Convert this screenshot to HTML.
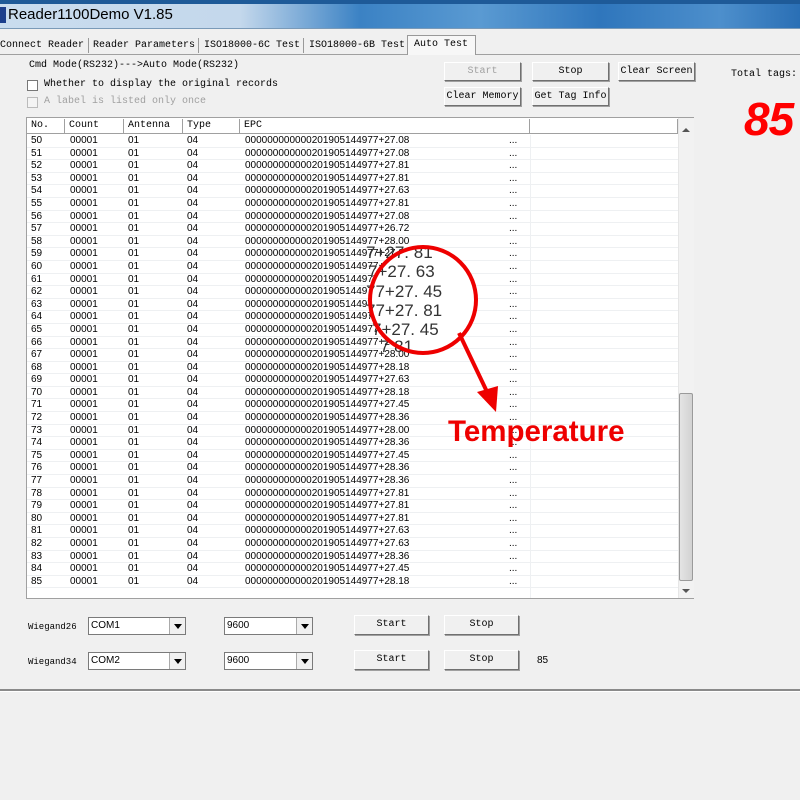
<!DOCTYPE html>
<html><head><meta charset="utf-8"><style>
*{margin:0;padding:0;box-sizing:border-box}
body{width:800px;height:800px;background:#f0f0f0;position:relative;overflow:hidden;font-family:"Liberation Mono","Noto Sans CJK SC",monospace;font-size:10px;color:#000}
.a{position:absolute;white-space:nowrap}
.title{left:0;top:0;width:800px;height:29px;background:linear-gradient(90deg,#c9dcee 0,#c4d8ec 30%,#3b82c4 45%,#5a9ad2 60%,#2f76bc 75%,#4d8fcc 90%,#2a6fb5 100%);border-bottom:1px solid #7a9ab8}
.title:before{content:"";position:absolute;left:0;top:0;right:0;height:4px;background:#1e5a98}
.btn{position:absolute;background:#f0f0f0;border:1px solid;border-color:#fff #707070 #707070 #fff;box-shadow:1px 1px 0 #a0a0a0;text-align:center;font-size:10px;line-height:17px}
.cb{position:absolute;width:11px;height:11px;border:1px solid #777;background:#fff}
.list{left:26px;top:117px;width:668px;height:482px;background:#fff;border:1px solid #a0a0a0}
.hd{position:absolute;top:1px;height:15px;border-right:1px solid #a0a0a0;border-bottom:1px solid #a0a0a0;background:#fff;padding-left:4px;line-height:14px;font-size:10px}
.rows{position:absolute;left:0;top:17px;width:651px;font-family:"Liberation Sans",sans-serif;font-size:10px}
.r{height:12.6px;line-height:12.5px;border-bottom:1px solid #eef0f2;position:relative}
.r span{position:absolute}
.c1{left:4px}.c2{left:43px}.c3{left:101px}.c4{left:160px}.c5{left:218px}.c6{left:482px}
.combo{position:absolute;height:18px;background:#fff;border:1px solid #7a7a7a;font-family:"Liberation Sans",sans-serif;font-size:10px;line-height:16px;padding-left:2px}
.combo i{position:absolute;right:0;top:0;width:16px;height:16px;background:#f0f0f0;border-left:1px solid #aaa}
.combo i:after{content:"";position:absolute;left:4px;top:6px;border:4px solid transparent;border-top:5px solid #000}
</style></head><body>
<div class="a title"></div>
<div class="a" style="left:0;top:7px;width:6px;height:16px;background:#1c3f8c"></div>
<div class="a" style="left:8px;top:6px;font-family:'Liberation Sans',sans-serif;font-size:15px">Reader1100Demo V1.85</div>

<div class="a" style="left:0;top:54px;width:800px;height:1px;background:#a0a0a0"></div>
<div class="a" style="left:0;top:37px;height:17px;line-height:17px;font-size:10px">Connect Reader</div>
<div class="a" style="left:88px;top:38px;width:1px;height:15px;background:#999"></div>
<div class="a" style="left:93px;top:37px;line-height:17px">Reader Parameters</div>
<div class="a" style="left:198px;top:38px;width:1px;height:15px;background:#999"></div>
<div class="a" style="left:204px;top:37px;line-height:17px">ISO18000-6C Test</div>
<div class="a" style="left:303px;top:38px;width:1px;height:15px;background:#999"></div>
<div class="a" style="left:309px;top:37px;line-height:17px">ISO18000-6B Test</div>
<div class="a" style="left:407px;top:35px;width:69px;height:20px;background:#f7f7f7;border:1px solid #999;border-bottom:none;padding-left:6px;line-height:18px">Auto Test</div>

<div class="a" style="left:29px;top:60px">Cmd Mode(RS232)--->Auto Mode(RS232)</div>
<div class="cb" style="left:27px;top:80px"></div>
<div class="a" style="left:44px;top:79px">Whether to display the original records</div>
<div class="cb" style="left:27px;top:97px;border-color:#bbb;background:#f4f4f4"></div>
<div class="a" style="left:44px;top:96px;color:#a0a0a0">A label is listed only once</div>

<div class="btn" style="left:444px;top:62px;width:77px;height:19px;color:#a0a0a0">Start</div>
<div class="btn" style="left:532px;top:62px;width:77px;height:19px">Stop</div>
<div class="btn" style="left:618px;top:62px;width:77px;height:19px">Clear Screen</div>
<div class="btn" style="left:444px;top:87px;width:77px;height:19px">Clear Memory</div>
<div class="btn" style="left:532px;top:87px;width:77px;height:19px">Get Tag Info</div>
<div class="a" style="left:731px;top:69px">Total tags:</div>
<div class="a" style="left:744px;top:94px;color:#f00;font-family:'Liberation Sans',sans-serif;font-style:italic;font-weight:bold;font-size:46px;line-height:50px;letter-spacing:-1px">85</div>

<div class="a list">
<div class="hd" style="left:0;width:38px">No.</div>
<div class="hd" style="left:38px;width:59px">Count</div>
<div class="hd" style="left:97px;width:59px">Antenna</div>
<div class="hd" style="left:156px;width:57px">Type</div>
<div class="hd" style="left:213px;width:290px">EPC</div>
<div class="hd" style="left:503px;width:148px"></div>
<div class="a" style="left:503px;top:17px;width:1px;height:463px;background:#eef0f2"></div>
<div class="rows">
<div class="r"><span class="c1">50</span><span class="c2">00001</span><span class="c3">01</span><span class="c4">04</span><span class="c5">000000000000201905144977+27.08</span><span class="c6">...</span></div>
<div class="r"><span class="c1">51</span><span class="c2">00001</span><span class="c3">01</span><span class="c4">04</span><span class="c5">000000000000201905144977+27.08</span><span class="c6">...</span></div>
<div class="r"><span class="c1">52</span><span class="c2">00001</span><span class="c3">01</span><span class="c4">04</span><span class="c5">000000000000201905144977+27.81</span><span class="c6">...</span></div>
<div class="r"><span class="c1">53</span><span class="c2">00001</span><span class="c3">01</span><span class="c4">04</span><span class="c5">000000000000201905144977+27.81</span><span class="c6">...</span></div>
<div class="r"><span class="c1">54</span><span class="c2">00001</span><span class="c3">01</span><span class="c4">04</span><span class="c5">000000000000201905144977+27.63</span><span class="c6">...</span></div>
<div class="r"><span class="c1">55</span><span class="c2">00001</span><span class="c3">01</span><span class="c4">04</span><span class="c5">000000000000201905144977+27.81</span><span class="c6">...</span></div>
<div class="r"><span class="c1">56</span><span class="c2">00001</span><span class="c3">01</span><span class="c4">04</span><span class="c5">000000000000201905144977+27.08</span><span class="c6">...</span></div>
<div class="r"><span class="c1">57</span><span class="c2">00001</span><span class="c3">01</span><span class="c4">04</span><span class="c5">000000000000201905144977+26.72</span><span class="c6">...</span></div>
<div class="r"><span class="c1">58</span><span class="c2">00001</span><span class="c3">01</span><span class="c4">04</span><span class="c5">000000000000201905144977+28.00</span><span class="c6">...</span></div>
<div class="r"><span class="c1">59</span><span class="c2">00001</span><span class="c3">01</span><span class="c4">04</span><span class="c5">000000000000201905144977+27.81</span><span class="c6">...</span></div>
<div class="r"><span class="c1">60</span><span class="c2">00001</span><span class="c3">01</span><span class="c4">04</span><span class="c5">000000000000201905144977+27.63</span><span class="c6">...</span></div>
<div class="r"><span class="c1">61</span><span class="c2">00001</span><span class="c3">01</span><span class="c4">04</span><span class="c5">000000000000201905144977+27.45</span><span class="c6">...</span></div>
<div class="r"><span class="c1">62</span><span class="c2">00001</span><span class="c3">01</span><span class="c4">04</span><span class="c5">000000000000201905144977+27.81</span><span class="c6">...</span></div>
<div class="r"><span class="c1">63</span><span class="c2">00001</span><span class="c3">01</span><span class="c4">04</span><span class="c5">000000000000201905144977+27.45</span><span class="c6">...</span></div>
<div class="r"><span class="c1">64</span><span class="c2">00001</span><span class="c3">01</span><span class="c4">04</span><span class="c5">000000000000201905144977+27.81</span><span class="c6">...</span></div>
<div class="r"><span class="c1">65</span><span class="c2">00001</span><span class="c3">01</span><span class="c4">04</span><span class="c5">000000000000201905144977+27.45</span><span class="c6">...</span></div>
<div class="r"><span class="c1">66</span><span class="c2">00001</span><span class="c3">01</span><span class="c4">04</span><span class="c5">000000000000201905144977+27.81</span><span class="c6">...</span></div>
<div class="r"><span class="c1">67</span><span class="c2">00001</span><span class="c3">01</span><span class="c4">04</span><span class="c5">000000000000201905144977+28.00</span><span class="c6">...</span></div>
<div class="r"><span class="c1">68</span><span class="c2">00001</span><span class="c3">01</span><span class="c4">04</span><span class="c5">000000000000201905144977+28.18</span><span class="c6">...</span></div>
<div class="r"><span class="c1">69</span><span class="c2">00001</span><span class="c3">01</span><span class="c4">04</span><span class="c5">000000000000201905144977+27.63</span><span class="c6">...</span></div>
<div class="r"><span class="c1">70</span><span class="c2">00001</span><span class="c3">01</span><span class="c4">04</span><span class="c5">000000000000201905144977+28.18</span><span class="c6">...</span></div>
<div class="r"><span class="c1">71</span><span class="c2">00001</span><span class="c3">01</span><span class="c4">04</span><span class="c5">000000000000201905144977+27.45</span><span class="c6">...</span></div>
<div class="r"><span class="c1">72</span><span class="c2">00001</span><span class="c3">01</span><span class="c4">04</span><span class="c5">000000000000201905144977+28.36</span><span class="c6">...</span></div>
<div class="r"><span class="c1">73</span><span class="c2">00001</span><span class="c3">01</span><span class="c4">04</span><span class="c5">000000000000201905144977+28.00</span><span class="c6">...</span></div>
<div class="r"><span class="c1">74</span><span class="c2">00001</span><span class="c3">01</span><span class="c4">04</span><span class="c5">000000000000201905144977+28.36</span><span class="c6">...</span></div>
<div class="r"><span class="c1">75</span><span class="c2">00001</span><span class="c3">01</span><span class="c4">04</span><span class="c5">000000000000201905144977+27.45</span><span class="c6">...</span></div>
<div class="r"><span class="c1">76</span><span class="c2">00001</span><span class="c3">01</span><span class="c4">04</span><span class="c5">000000000000201905144977+28.36</span><span class="c6">...</span></div>
<div class="r"><span class="c1">77</span><span class="c2">00001</span><span class="c3">01</span><span class="c4">04</span><span class="c5">000000000000201905144977+28.36</span><span class="c6">...</span></div>
<div class="r"><span class="c1">78</span><span class="c2">00001</span><span class="c3">01</span><span class="c4">04</span><span class="c5">000000000000201905144977+27.81</span><span class="c6">...</span></div>
<div class="r"><span class="c1">79</span><span class="c2">00001</span><span class="c3">01</span><span class="c4">04</span><span class="c5">000000000000201905144977+27.81</span><span class="c6">...</span></div>
<div class="r"><span class="c1">80</span><span class="c2">00001</span><span class="c3">01</span><span class="c4">04</span><span class="c5">000000000000201905144977+27.81</span><span class="c6">...</span></div>
<div class="r"><span class="c1">81</span><span class="c2">00001</span><span class="c3">01</span><span class="c4">04</span><span class="c5">000000000000201905144977+27.63</span><span class="c6">...</span></div>
<div class="r"><span class="c1">82</span><span class="c2">00001</span><span class="c3">01</span><span class="c4">04</span><span class="c5">000000000000201905144977+27.63</span><span class="c6">...</span></div>
<div class="r"><span class="c1">83</span><span class="c2">00001</span><span class="c3">01</span><span class="c4">04</span><span class="c5">000000000000201905144977+28.36</span><span class="c6">...</span></div>
<div class="r"><span class="c1">84</span><span class="c2">00001</span><span class="c3">01</span><span class="c4">04</span><span class="c5">000000000000201905144977+27.45</span><span class="c6">...</span></div>
<div class="r"><span class="c1">85</span><span class="c2">00001</span><span class="c3">01</span><span class="c4">04</span><span class="c5">000000000000201905144977+28.18</span><span class="c6">...</span></div>
</div>
<div class="a" style="left:651px;top:0;width:16px;height:480px;background:#f2f2f2;border-left:1px solid #e6e6e6"></div>
<div class="a" style="left:655px;top:6px;border:4px solid transparent;border-bottom:4px solid #555"></div>
<div class="a" style="left:655px;top:471px;border:4px solid transparent;border-top:4px solid #555"></div>
<div class="a" style="left:652px;top:275px;width:14px;height:188px;background:linear-gradient(90deg,#e4e4e4,#d2d2d2);border:1px solid #9a9a9a;border-radius:2px"></div>
</div>

<svg class="a" style="left:0;top:0" width="800" height="800">
<circle cx="423" cy="300" r="53" fill="#fff"/>
<g font-family="Liberation Sans,sans-serif" font-size="17" fill="#333">
<text x="366" y="258">7+27. 81</text><text x="368" y="277">7+27. 63</text><text x="366" y="297">77+27. 45</text><text x="366" y="316">77+27. 81</text><text x="372" y="335">7+27. 45</text><text x="380" y="352">7  81</text>
</g>
<circle cx="423" cy="300" r="53" fill="none" stroke="#e00" stroke-width="4"/>
<line x1="459" y1="333" x2="489" y2="396" stroke="#e00" stroke-width="4"/>
<polygon points="496,412 477,392 498,386" fill="#e00"/>
<text x="448" y="441" font-family="Liberation Sans,sans-serif" font-weight="bold" font-size="29.5" fill="#e00">Temperature</text>
</svg>

<div class="a" style="left:28px;top:622px;font-size:9px">Wiegand26</div>
<div class="combo" style="left:88px;top:617px;width:98px">COM1<i></i></div>
<div class="combo" style="left:224px;top:617px;width:89px">9600<i></i></div>
<div class="btn" style="left:354px;top:615px;width:75px;height:20px">Start</div>
<div class="btn" style="left:444px;top:615px;width:75px;height:20px">Stop</div>
<div class="a" style="left:28px;top:657px;font-size:9px">Wiegand34</div>
<div class="combo" style="left:88px;top:652px;width:98px">COM2<i></i></div>
<div class="combo" style="left:224px;top:652px;width:89px">9600<i></i></div>
<div class="btn" style="left:354px;top:650px;width:75px;height:20px">Start</div>
<div class="btn" style="left:444px;top:650px;width:75px;height:20px">Stop</div>
<div class="a" style="left:537px;top:655px;font-family:'Liberation Sans',sans-serif">85</div>

<div class="a" style="left:0;top:689px;width:800px;height:2px;background:#8a8a8a"></div>
<div class="a" style="left:0;top:691px;width:800px;height:1px;background:#fff"></div>
</body></html>
